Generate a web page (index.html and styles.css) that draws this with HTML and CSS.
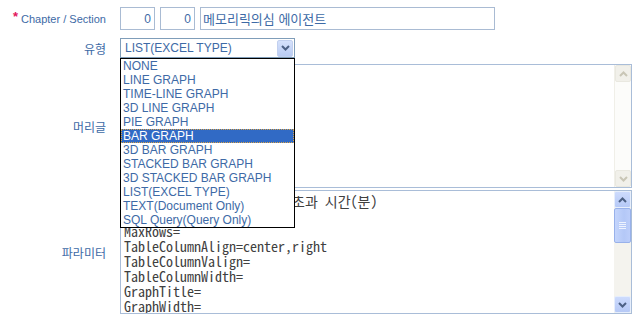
FILE: index.html
```html
<!DOCTYPE html>
<html lang="ko">
<head>
<meta charset="UTF-8" />
<title>리포트 설정</title>
<link rel="stylesheet" href="styles.css">
</head>
<body>
  <div class="form">
    <div class="row row-chapter">
      <label class="lbl"><span class="req">*</span> Chapter / Section</label>
      <div class="field">
        <input class="box num" type="text" value="0" />
        <input class="box num" type="text" value="0" />
        <input class="box title" type="text" value="메모리릭의심 에이전트" />
      </div>
    </div>

    <div class="row row-type">
      <label class="lbl">유형</label>
      <div class="field select-wrap">
        <div class="select">
          <span>LIST(EXCEL TYPE)</span>
          <span class="drop-btn">
            <svg width="9" height="6" viewBox="0 0 9 6"><polyline points="1,1 4.5,4.5 8,1" fill="none" stroke="#4d6185" stroke-width="2"/></svg>
          </span>
        </div>
        <ul class="options">
          <li>NONE</li>
          <li>LINE GRAPH</li>
          <li>TIME-LINE GRAPH</li>
          <li>3D LINE GRAPH</li>
          <li>PIE GRAPH</li>
          <li class="selected">BAR GRAPH</li>
          <li>3D BAR GRAPH</li>
          <li>STACKED BAR GRAPH</li>
          <li>3D STACKED BAR GRAPH</li>
          <li>LIST(EXCEL TYPE)</li>
          <li>TEXT(Document Only)</li>
          <li>SQL Query(Query Only)</li>
        </ul>
      </div>
    </div>

    <div class="row row-header">
      <label class="lbl">머리글</label>
      <div class="area">
        <pre class="area-text"></pre>
        <div class="scroll disabled">
          <span class="sbtn"><svg width="9" height="6" viewBox="0 0 9 6"><polyline points="1,5 4.5,1.5 8,5" fill="none" stroke="#c9c6b6" stroke-width="2"/></svg></span>
          <span class="track"></span>
          <span class="sbtn"><svg width="9" height="6" viewBox="0 0 9 6"><polyline points="1,1 4.5,4.5 8,1" fill="none" stroke="#c9c6b6" stroke-width="2"/></svg></span>
        </div>
      </div>
    </div>

    <div class="row row-param">
      <label class="lbl">파라미터</label>
      <div class="area">
        <pre class="area-text">TableColumnTitle=Agents,초과 시간(분)
Rows=
MaxRows=
TableColumnAlign=center,right
TableColumnValign=
TableColumnWidth=
GraphTitle=
GraphWidth=</pre>
        <div class="scroll">
          <span class="sbtn"><svg width="9" height="6" viewBox="0 0 9 6"><polyline points="1,5 4.5,1.5 8,5" fill="none" stroke="#4d6185" stroke-width="2"/></svg></span>
          <span class="track">
            <span class="thumb"><i></i><i></i><i></i><i></i></span>
          </span>
          <span class="sbtn"><svg width="9" height="6" viewBox="0 0 9 6"><polyline points="1,1 4.5,4.5 8,1" fill="none" stroke="#4d6185" stroke-width="2"/></svg></span>
        </div>
      </div>
    </div>
  </div>
</body>
</html>
```

FILE: styles.css
```css
* {
  box-sizing: border-box;
}
body {
  margin: 0;
  background: #fff;
  font-family: 'Liberation Sans', Arial, 'Noto Sans CJK KR', sans-serif;
  color: #3d6aa6;
}
.form {
  padding-top: 7px;
  width: 637px;
}
.row {
  display: flex;
  align-items: center;
}
.lbl {
  width: 106px;
  margin-right: 14px;
  text-align: right;
  font-size: 12px;
  font-family: 'Noto Sans CJK KR', sans-serif;
  color: #3d6aa6;
  white-space: nowrap;
}
.row-chapter .lbl {
  font-family: 'Liberation Sans', Arial, sans-serif;
  font-size: 11px;
}
.req {
  color: #e2155c;
  font-size: 13px;
  font-weight: bold;
  position: relative;
  top: -2px;
}
.field {
  display: flex;
  gap: 5px;
}

/* chapter inputs */
.row-chapter {
  height: 23px;
  margin-bottom: 8px;
}
.box {
  height: 23px;
  border: 1px solid #a9bbd3;
  margin: 0;
  padding: 0 3px;
  outline: none;
  color: #3d6aa6;
  background: #fff;
  font-family: 'Liberation Sans', Arial, 'Noto Sans CJK KR', sans-serif;
}
.num {
  width: 35px;
  text-align: right;
  font-size: 12px;
}
.title {
  width: 295px;
  padding-left: 2px;
  font-size: 13px;
  font-family: 'Noto Sans CJK KR', sans-serif;
}

/* select */
.row-type {
  height: 20px;
  margin-bottom: 6px;
  position: relative;
  z-index: 2;
}
.select-wrap {
  position: relative;
}
.select {
  width: 175px;
  height: 20px;
  border: 1px solid #7f9db9;
  display: flex;
  align-items: center;
  justify-content: space-between;
  padding: 0 1px 0 4px;
  font-size: 12px;
  color: #3d6aa6;
}
.drop-btn {
  width: 16px;
  height: 17px;
  display: flex;
  align-items: center;
  justify-content: center;
  background: linear-gradient(#d6e2fc, #b9cbf3);
  border: 1px solid #c2d0ef;
  border-radius: 2px;
}
.options {
  position: absolute;
  top: 20px;
  left: 0;
  width: 175px;
  margin: 0;
  padding: 0;
  list-style: none;
  background: #fff;
  border: 1px solid #000;
  font-size: 12px;
  color: #3d6aa6;
}
.options li {
  height: 14px;
  line-height: 14px;
  padding-left: 2px;
  white-space: nowrap;
}
.options li.selected {
  background: #316ac5;
  color: #fff;
  outline: 1px dotted #d9a347;
  outline-offset: -1px;
}

/* textareas */
.row-header {
  margin-bottom: 2px;
}
.area {
  width: 512px;
  height: 124px;
  border: 1px solid #a9bdd8;
  display: flex;
}
.area-text {
  flex: 1;
  margin: 0;
  padding: 3px 0 0 3px;
  font-family: 'Noto Sans Mono CJK KR', 'Liberation Mono', monospace;
  font-size: 14px;
  line-height: 15px;
  color: #404040;
  overflow: hidden;
}
.scroll {
  width: 17px;
  display: flex;
  flex-direction: column;
  background: #f4f3ee;
}
.sbtn {
  height: 17px;
  display: flex;
  align-items: center;
  justify-content: center;
  background: linear-gradient(#cddbfd, #b6c9f6);
  border: 1px solid #e6eefc;
  border-radius: 2px;
}
.track {
  flex: 1;
  display: flex;
  flex-direction: column;
}
.thumb {
  height: 35px;
  background: linear-gradient(90deg, #c4d5fc, #b4c8f7 60%, #bccefa);
  border: 1px solid #98b1ea;
  border-radius: 2px;
  display: flex;
  flex-direction: column;
  align-items: center;
  justify-content: center;
  gap: 1px;
}
.thumb i {
  display: block;
  width: 7px;
  height: 1px;
  background: #eef3fe;
}
.scroll.disabled {
  background: #fcfcfa;
  border-left: 1px solid #f0efe8;
}
.scroll.disabled .sbtn {
  background: #f1f0ea;
  border: 1px solid #e9e8e0;
}
```
